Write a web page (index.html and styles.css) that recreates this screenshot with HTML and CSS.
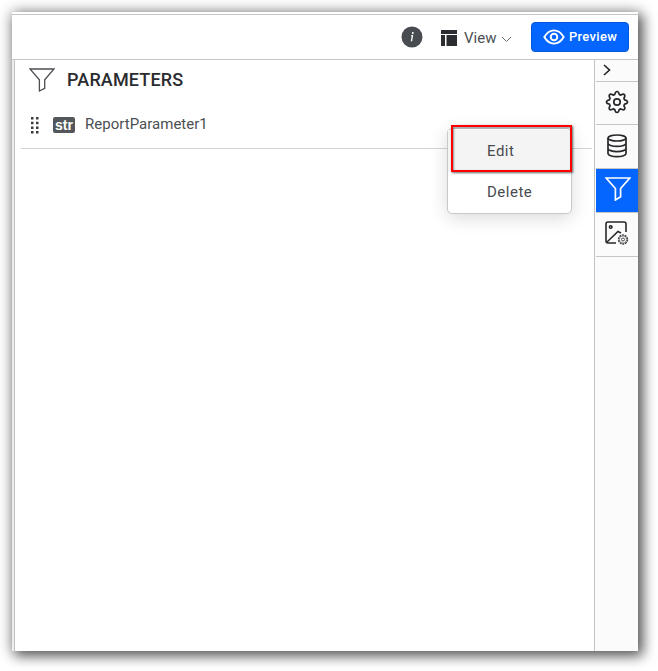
FILE: index.html
```html
<!DOCTYPE html>
<html lang="en">
<head>
<meta charset="utf-8">
<title>Parameters</title>
<link rel="stylesheet" href="styles.css">
</head>
<body>
<div class="window">
  <header class="toolbar">
    <svg class="info" viewBox="0 0 22 22"><circle cx="11" cy="11" r="10.5" fill="#484b50"/><circle cx="11.800" cy="7" r="1" fill="#fff"/><path d="M10.200 9.600h1.300l-1 5.100h.8" fill="none" stroke="#fff" stroke-width="1.300"/></svg>
    <div class="view">
      <svg class="view-icon" viewBox="0 0 16 16"><path d="M0 0h16v4H0zM0 5h4v11H0zM5.500 5H16v11H5.500z" fill="#2c2d30"/></svg>
      <span class="view-text">View</span>
      <svg class="caret" viewBox="0 0 11 7"><path d="M1 1l4.500 4.500L10 1" fill="none" stroke="#66696d" stroke-width="1"/></svg>
    </div>
    <button class="preview">
      <svg class="eye" viewBox="0 0 22 16"><path d="M1.300 8C6.500-.8 15.500-.8 20.700 8 15.500 16.800 6.500 16.800 1.300 8z" fill="none" stroke="#fff" stroke-width="1.900"/><circle cx="11" cy="8" r="3.300" fill="none" stroke="#fff" stroke-width="2"/></svg>
      <span>Preview</span>
    </button>
  </header>
  <div class="body">
    <main class="panel">
      <div class="heading">
        <svg class="heading-icon" viewBox="0 0 26 24"><path d="M1 1h24l-9.300 10.800v8.600L10.400 23V11.800z" fill="none" stroke="#4b4e52" stroke-width="1.300"/></svg>
        <h1>PARAMETERS</h1>
      </div>
      <div class="row">
        <svg class="grip" viewBox="0 0 8 17"><path d="M0 0h2.500v2.500H0zM5 0h2.500v2.500H5zM0 4.700h2.500v2.500H0zM5 4.700h2.500v2.500H5zM0 9.400h2.500v2.500H0zM5 9.400h2.500v2.500H5zM0 14h2.500v2.500H0zM5 14h2.500v2.500H5z" fill="#3b3d40"/></svg>
        <span class="type">str</span>
        <span class="name">ReportParameter1</span>
      </div>
      <div class="menu">
        <div class="item">Edit</div>
        <div class="item">Delete</div>
        <div class="highlight"></div>
      </div>
    </main>
    <nav class="rail">
      <div class="tab collapse"><svg width="8" height="12" viewBox="0 0 8 12"><path d="M1 1l5.500 5L1 11" fill="none" stroke="#222" stroke-width="1.600"/></svg></div>
      <div class="tab"><svg width="24" height="24" viewBox="0 0 24 24"><g fill="none" stroke="#25272a" stroke-width="1.700" stroke-linejoin="round"><path d="M9.800 4.400Q10.400 1.500 12 1.500T14.200 4.400L15.800 5.100Q18.300 3.500 19.400 4.600T18.900 8.200L19.600 9.800Q22.500 10.400 22.500 12T19.600 14.200L18.900 15.800Q20.500 18.300 19.400 19.400T15.800 18.900L14.200 19.600Q13.600 22.500 12 22.500T9.800 19.600L8.200 18.900Q5.700 20.500 4.600 19.400T5.100 15.800L4.400 14.200Q1.500 13.600 1.500 12T4.400 9.800L5.100 8.200Q3.500 5.700 4.600 4.600T8.200 5.100z"/><circle cx="12" cy="12" r="3.200"/></g></svg></div>
      <div class="tab"><svg width="20" height="24" viewBox="0 0 20 24"><g fill="none" stroke="#25272a" stroke-width="1.700"><ellipse cx="10" cy="4" rx="9" ry="3"/><path d="M1 4v15.500c0 1.700 4 3.200 9 3.200s9-1.500 9-3.200V4M1 9.200c0 1.700 4 3.200 9 3.200s9-1.500 9-3.200M1 14.400c0 1.700 4 3.200 9 3.200s9-1.500 9-3.200"/></g></svg></div>
      <div class="tab active"><svg width="26" height="24" viewBox="0 0 26 24"><path d="M1.200 1h23.600l-9.200 10.500v8.300L10.400 23V11.500z" fill="none" stroke="#fff" stroke-width="1.700"/></svg></div>
      <div class="tab image"><svg width="24" height="24" viewBox="0 0 24 24"><g fill="none" stroke="#25272a" stroke-width="1.600"><path d="M21 11V3q0-2-2-2H3Q1 1 1 3v17q0 2 2 2h8"/><circle cx="5.700" cy="6" r="1.300"/><path d="M2 21L13 10.500l3 1.500"/></g><g fill="none" stroke="#45474a"><circle cx="18" cy="18.500" r="4.500" stroke-width="1.400" stroke-dasharray="2 .8"/><circle cx="18" cy="18.500" r="3.700" stroke-width=".7"/><circle cx="18" cy="18.500" r="1.500"/></g></svg></div>
    </nav>
  </div>
</div>
</body>
</html>
```
FILE: styles.css
```css
* { box-sizing: border-box; }
svg { display: block; flex: none; }
body {
  margin: 0;
  padding: 12px 20px 20px 12px;
  height: 671px;
  overflow: hidden;
  background: #fff;
  font-family: Roboto, "Liberation Sans", sans-serif;
  color: #303236;
}
.window {
  height: 639px;
  display: flex;
  flex-direction: column;
  background: #fff;
  box-shadow: 4px 4px 12px 1px rgba(0, 0, 0, .58), 0 0 14px 1px rgba(0, 0, 0, .24);
}
.toolbar {
  height: 48px;
  padding: 0 9px 0 0;
  display: flex;
  align-items: center;
  justify-content: flex-end;
  border-bottom: 1px solid #c6c6c6;
  background: linear-gradient(#fff 2px, #c6c6c6 2px, #c6c6c6 3px, #fff 3px);
}
.info { width: 22px; height: 22px; margin: 2px 18px 0 0; }
.view { display: flex; align-items: center; width: 71px; margin: 5px 19px 0 0; }
.view-icon { width: 16px; height: 16px; margin-right: 7px; }
.view-text { width: 33px; font-size: 15px; line-height: 20px; color: #4c4f53; }
.caret { width: 11px; height: 7px; margin: 3px 0 0 4px; }
.preview {
  width: 98px;
  height: 30px;
  margin-top: 3px;
  padding: 0 0 0 11px;
  display: flex;
  align-items: center;
  border: 1px solid #0758d8;
  border-radius: 4px;
  background: #0565ff;
  color: #fff;
  font: 500 13px/18px Roboto, sans-serif;
}
.eye { width: 22px; height: 16px; margin-right: 4px; }
.preview span { letter-spacing: .3px; }
.body { flex: 1; display: flex; border-left: 2px solid #eee; }
.panel { position: relative; flex: 1; border-left: 1px solid #c3c3c3; padding-left: 6px; }
.heading { height: 40px; display: flex; align-items: center; padding-left: 8px; }
.heading-icon { width: 26px; height: 24px; margin-right: 12px; }
h1 { margin: 0; font-size: 18px; line-height: 24px; font-weight: 500; letter-spacing: .15px; color: #2a2c30; }
.row { height: 49px; margin-right: 2px; padding: 0 0 1px 10px; display: flex; align-items: center; border-bottom: 1px solid #d4d4d4; }
.grip { width: 8px; height: 17px; margin: 4px 14px 0 0; }
.type {
  width: 22px;
  height: 16px;
  margin: 3px 10px 0 0;
  border-radius: 2px;
  background: #53575b;
  color: #fff;
  text-align: center;
  font: bold 14px/16px "Liberation Sans", sans-serif;
}
.name { font-size: 15px; line-height: 20px; letter-spacing: .02px; color: #4c4f53; }
.menu {
  position: absolute;
  left: 432px;
  top: 68px;
  width: 125px;
  height: 86px;
  padding-top: 1px;
  border: 1px solid #c8c8c8;
  border-radius: 5px;
  background: #fff;
  box-shadow: 0 4px 18px rgba(0, 0, 0, .15);
}
.item { height: 41px; padding-left: 39px; font-size: 15px; line-height: 42px; letter-spacing: .5px; color: #484b4f; }
.item:first-child { background: #f4f4f4; }
.highlight { position: absolute; left: 3px; top: -4px; width: 121px; height: 47px; border: 2px solid #f00; box-shadow: 1px 1px 2px rgba(0, 0, 0, .6), inset 1px 1px 2px rgba(0, 0, 0, .4); }
.rail { width: 44px; border-left: 1px solid #c3c3c3; background: #fbfbfb; padding-left: 1px; }
.tab { height: 44px; display: flex; align-items: center; justify-content: center; border-bottom: 1px solid #c6c6c6; padding: 0 1px 2px 0; }
.tab.collapse { height: 22px; justify-content: flex-start; padding: 0 0 2px 7px; }
.tab.collapse + .tab { height: 43px; }
.tab.active { background: #0565ff; padding: 0 0 4px 1px; }
.tab.image { padding-bottom: 4px; }
```
